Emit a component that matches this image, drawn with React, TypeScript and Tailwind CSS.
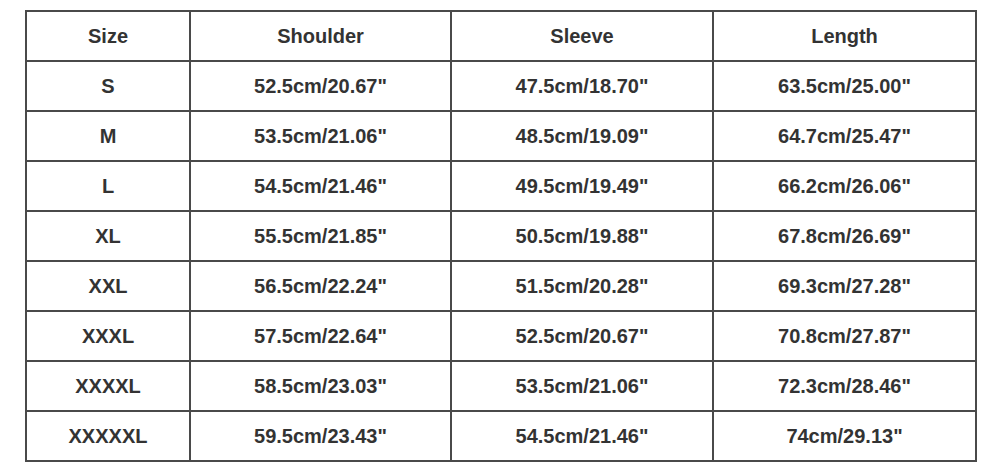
const headers = ["Size", "Shoulder", "Sleeve", "Length"];

const rows = [
  ["S", '52.5cm/20.67"', '47.5cm/18.70"', '63.5cm/25.00"'],
  ["M", '53.5cm/21.06"', '48.5cm/19.09"', '64.7cm/25.47"'],
  ["L", '54.5cm/21.46"', '49.5cm/19.49"', '66.2cm/26.06"'],
  ["XL", '55.5cm/21.85"', '50.5cm/19.88"', '67.8cm/26.69"'],
  ["XXL", '56.5cm/22.24"', '51.5cm/20.28"', '69.3cm/27.28"'],
  ["XXXL", '57.5cm/22.64"', '52.5cm/20.67"', '70.8cm/27.87"'],
  ["XXXXL", '58.5cm/23.03"', '53.5cm/21.06"', '72.3cm/28.46"'],
  ["XXXXXL", '59.5cm/23.43"', '54.5cm/21.46"', '74cm/29.13"'],
];

export default function App() {
  const all = [headers, ...rows];
  return (
    <div
      className="w-[1000px] h-[471px] bg-white pt-[10px] pl-[25px]"
      style={{ fontFamily: '"Liberation Sans", Arial, sans-serif' }}
    >
      <div className="w-[952px] border-l-2 border-t-2 border-[#4a4a4a] grid grid-cols-[164px_261px_262px_263px]">
        {all.map((row, i) =>
          row.map((cell, j) => (
            <div
              key={`${i}-${j}`}
              className="h-[50px] border-r-2 border-b-2 border-[#4a4a4a] flex items-center justify-center text-[20px] font-bold text-[#333]"
            >
              {cell}
            </div>
          ))
        )}
      </div>
    </div>
  );
}
